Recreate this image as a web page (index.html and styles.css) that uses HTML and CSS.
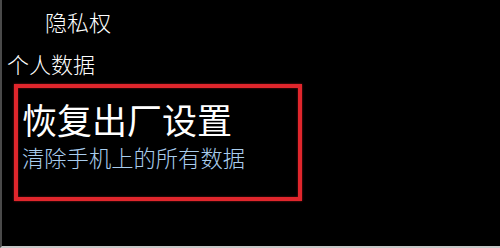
FILE: index.html
```html
<!DOCTYPE html>
<html lang="zh-CN">
<head>
<meta charset="utf-8">
<link rel="stylesheet" href="styles.css">
</head>
<body>
<div class="screen">
  <div class="item indent">隐私权</div>
  <div class="item">个人数据</div>
  <div class="highlight">
    <div class="title">恢复出厂设置</div>
    <div class="subtitle">清除手机上的所有数据</div>
  </div>
</div>
</body>
</html>
```
FILE: styles.css
```css
html, body {
  margin: 0;
  padding: 0;
  background: #000;
}
.screen {
  width: 500px;
  height: 248px;
  box-sizing: border-box;
  background: #000;
  border-left: 2px solid #4a4a4a;
  border-bottom: 2px solid #c8c8c8;
  padding: 10px 0 0 5px;
  font-family: "Noto Sans CJK SC", "Noto Sans", sans-serif;
  font-weight: 300;
  color: #fff;
  overflow: hidden;
}
.item {
  font-size: 22px;
  line-height: 22px;
  height: 22px;
}
.indent {
  margin-left: 38px;
  margin-bottom: 20px;
}
.highlight {
  margin: 10px 0 0 7px;
  width: 288px;
  height: 117px;
  box-sizing: border-box;
  border: 4px solid #e0262c;
  box-shadow: 0 0 2px rgba(224, 38, 44, 0.6), inset 0 0 2px rgba(224, 38, 44, 0.6);
  padding: 11px 0 0 4px;
}
.title {
  font-size: 35px;
  line-height: 39px;
  color: #fff;
  font-weight: 400;
}
.subtitle {
  margin-top: 7px;
  font-size: 22.3px;
  line-height: 24px;
  color: #a9cdee;
}
```
